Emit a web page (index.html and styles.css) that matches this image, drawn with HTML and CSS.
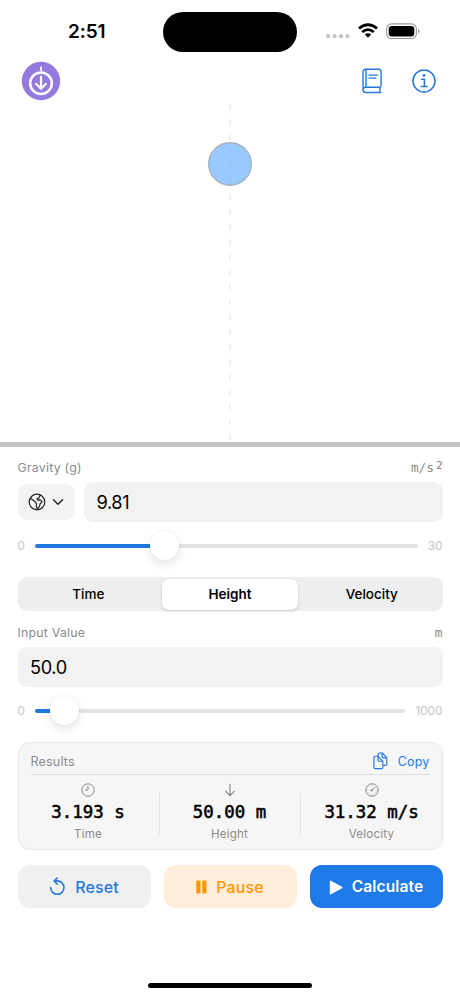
FILE: index.html
```html
<!DOCTYPE html>
<html lang="en">
<head>
<meta charset="utf-8">
<title>Free Fall</title>
<link rel="stylesheet" href="styles.css">
</head>
<body>
<header class="status">
  <div class="clock">2:51</div>
  <div class="island"></div>
  <svg class="indicators" width="94" height="20" viewBox="0 0 94 20">
    <g fill="#c6c6c6"><circle cx="2.2" cy="15.2" r="2.1"/><circle cx="8.6" cy="15.2" r="2.1"/><circle cx="15" cy="15.2" r="2.1"/><circle cx="21.5" cy="15.2" r="2.1"/></g>
    <g fill="none" stroke="#000" stroke-width="2.8"><path d="M33 7.5Q42 .1 51 7.5"/><path d="M36.2 11Q42 6.2 47.8 11"/></g>
    <path d="M42 16.8l-3.2-3.2q3.2-2.5 6.4 0z"/>
    <rect x="60.6" y="2.9" width="29.8" height="14.6" rx="4.9" fill="none" stroke="#999" stroke-width="1.1"/>
    <rect x="62.7" y="4.9" width="25.6" height="10.6" rx="3.2"/>
    <path d="M92 8q3 2.2 0 4.4z" fill="#999"/>
  </svg>
</header>
<nav class="toolbar">
  <svg class="logo" width="40" height="40" viewBox="0 0 40 40">
    <circle cx="20" cy="20" r="19.2" fill="#9579df"/>
    <g fill="none" stroke="#fff" stroke-width="2.5"><circle cx="20" cy="22.3" r="10.8"/><path d="M20 5.8v4" stroke-width="1.8"/><path d="M20 14.8v12.6M14.4 22.2l5.6 5.6 5.6-5.6" stroke-width="2.2"/></g>
  </svg>
  <svg class="book" width="24" height="28" viewBox="0 0 24 28" fill="none" stroke="#2478dc" stroke-width="1.4" stroke-linecap="round" stroke-linejoin="round">
    <path d="M3 22.8V4.9a2.6 2.6 0 0 1 2.6-2.6h13.2a2.3 2.3 0 0 1 2.3 2.3v14a1.6 1.6 0 0 1-1.6 1.6H5.6a2.6 2.6 0 0 0 0 5.3h15.1M6 2.5v17.6M19.9 20.4v5"/><path d="M9 8.2h8.8M9 11.2h6.8" stroke-width="1.2"/>
  </svg>
  <svg width="26" height="26" viewBox="0 0 26 26" fill="none" stroke="#2478dc" stroke-width="1.5" stroke-linecap="round">
    <circle cx="13" cy="13" r="11"/><path d="M10.6 11.2h2.8v7.3M10.2 18.6h5.8"/><circle cx="13" cy="7.4" r="1.4" fill="#2478dc" stroke="none"/>
  </svg>
</nav>
<section class="scene">
  <svg width="60" height="338" viewBox="0 0 60 338">
    <circle cx="30" cy="60" r="21.3" fill="#98c9ff" stroke="#a3b4c4" stroke-width="1.5"/>
    <path d="M30 .3v336" stroke="#999" stroke-opacity=".2" stroke-width="1.4" stroke-dasharray="6 9"/>
  </svg>
</section>
<div class="ground"></div>
<main class="panel">
  <div class="label"><span>Gravity (g)</span><span class="unit">m/s<span class="sq">2</span></span></div>
  <div class="fields">
    <div class="planet">
      <svg width="18" height="18" viewBox="0 0 18 18" fill="none" stroke="#222" stroke-width="1.2" stroke-linejoin="round"><circle cx="9" cy="9" r="7.8"/><path d="M2.2 5l4.6 3.4 1.8 2.4-.4 2.2 1.2 3.2 2.2-3 .4-2.2 2.2-2.4-2.2-1.8-2.4.4-.6-1.4 2-.9 1.2-3"/></svg>
      <svg width="12" height="8" viewBox="0 0 12 8" fill="none" stroke="#222" stroke-width="1.4" stroke-linecap="round" stroke-linejoin="round"><path d="M1.4 1.7L6 6.2l4.6-4.5"/></svg>
    </div>
    <div class="input">9.81</div>
  </div>
  <div class="slider">
    <span class="min">0</span>
    <div class="track"><div class="fill" style="width:33.9%"><i class="thumb"></i></div></div>
    <span class="max">30</span>
  </div>
  <div class="segments"><div>Time</div><div class="selected">Height</div><div>Velocity</div></div>
  <div class="label second"><span>Input Value</span><span class="unit">m</span></div>
  <div class="fields"><div class="input">50.0</div></div>
  <div class="slider">
    <span class="min">0</span>
    <div class="track"><div class="fill" style="width:8.2%"><i class="thumb"></i></div></div>
    <span class="max wide">1000</span>
  </div>
  <section class="results">
    <div class="results-head"><span>Results</span>
      <span class="copy"><svg width="16" height="18" viewBox="0 0 16 18" fill="none" stroke="#2478dc" stroke-width="1.15" stroke-linejoin="round"><path d="M5.2 4.3V2.5q0-1.5 1.5-1.5h2.6l4.5 4.6v6.3q0 1.5-1.5 1.5h-2M9 1v3.4q0 1.4 1.4 1.4h3.4"/><path d="M2.3 4.2h2.5L9.9 9.3v5.9q0 1.4-1.4 1.4H2.3q-1.4 0-1.4-1.4V5.6q0-1.4 1.4-1.4zM5 4.4v3.5q0 1.3 1.3 1.3h3.5"/></svg>Copy</span>
    </div>
    <div class="stats">
      <div class="stat"><svg width="14" height="14" viewBox="0 0 14 14" fill="none" stroke="#858585" stroke-width="1"><circle cx="7" cy="7" r="6.2"/><path d="M7 3v4H3.8"/></svg><b>3.193 s</b><span>Time</span></div>
      <div class="stat"><svg width="14" height="14" viewBox="0 0 14 14" fill="none" stroke="#858585" stroke-width="1.1" stroke-linecap="round" stroke-linejoin="round"><path d="M7 1.3v11.2M2.6 8.2L7 12.6l4.4-4.4"/></svg><b>50.00 m</b><span>Height</span></div>
      <div class="stat"><svg width="14" height="14" viewBox="0 0 14 14" fill="none" stroke="#858585" stroke-width="1"><circle cx="7" cy="7" r="6.2"/><path d="M6.3 7.7L10 4.4"/><circle cx="6.6" cy="7.4" r=".7"/><circle cx="7" cy="7" r="4.2" stroke-dasharray=".6 2.7" stroke-width=".9"/></svg><b>31.32 m/s</b><span>Velocity</span></div>
    </div>
  </section>
  <div class="actions">
    <div class="btn reset"><svg width="17" height="19" viewBox="0 0 17 19" fill="none" stroke="#2478dc" stroke-width="1.6" stroke-linecap="round" stroke-linejoin="round"><path d="M1.6 10.6a6.7 6.7 0 1 0 6.7-6.7H5.2M8.3 1L5.1 3.9l3.2 3.3"/></svg>Reset</div>
    <div class="btn pause"><svg width="11" height="14" viewBox="0 0 11 14" fill="#ff9500"><rect x=".3" y=".4" width="4.2" height="13.2" rx=".8"/><rect x="6.3" y=".4" width="4.2" height="13.2" rx=".8"/></svg>Pause</div>
    <div class="btn calculate"><svg width="14" height="15" viewBox="0 0 14 15" fill="#fff"><path d="M.8 1.5q0-1.3 1.2-.7l11 6q1 .7 0 1.4l-11 6q-1.2.6-1.2-.7z"/></svg>Calculate</div>
  </div>
</main>
<footer class="home"></footer>
</body>
</html>
```

FILE: styles.css
```css
* { box-sizing: border-box; }
body {
  margin: 0;
  width: 460px;
  height: 997px;
  overflow: hidden;
  display: flex;
  flex-direction: column;
  background: #fff;
  color: #000;
  font-family: Inter, sans-serif;
}
svg { display: block; flex: none; }

.status { display: grid; grid-template-columns: 163px 134px 1fr; height: 60px; padding-top: 12px; }
.clock { padding-left: 68px; font-size: 19px; line-height: 40px; font-weight: 600; letter-spacing: -.1px; }
.island { height: 40px; border-radius: 20px; background: #000; }
.indicators { margin: 9px 0 0 29px; }

.toolbar { display: flex; align-items: center; height: 44px; padding: 0 23px 0 21px; }
.logo { margin-top: -2px; }
.book { margin: -2px 27px 0 auto; }
.toolbar svg:last-child { margin-top: -2px; }

.scene { display: flex; justify-content: center; height: 338px; }
.ground { height: 5px; background: #c4c4c4; }

.panel { padding: 12px 17.5px 0; }
.label { display: flex; justify-content: space-between; height: 18px; line-height: 18px; font-size: 12.3px; letter-spacing: .25px; color: #8b8b8d; }
.unit { font-family: "DejaVu Sans Mono", monospace; font-size: 12.8px; letter-spacing: 0; }
.sq { display: inline-block; font-size: 10.5px; line-height: 1; width: 8.5px; text-align: right; transform: translateY(-3px); -webkit-text-stroke: .2px; }
.fields { display: flex; align-items: center; gap: 9px; height: 40px; margin-top: 5px; }
.planet { display: flex; align-items: center; justify-content: center; gap: 6px; width: 57.5px; height: 36px; border-radius: 9px; background: #f3f3f3; }
.input { flex: 1; height: 40px; padding-left: 12.5px; border-radius: 9px; background: #f2f2f2; font-size: 18.2px; line-height: 41px; letter-spacing: -.4px; }

.slider { display: flex; align-items: center; height: 28px; margin-top: 10px; font-size: 11.8px; color: #c5c5c7; }
.min { width: 17px; }
.track { flex: 1; height: 4px; border-radius: 2px; background: #e2e2e2; }
.fill { position: relative; height: 4px; border-radius: 2px; background: #1f79df; }
.thumb { position: absolute; right: -14.5px; top: -13.5px; width: 29px; height: 29px; border-radius: 50%; background: #fff; box-shadow: 0 4px 10px rgba(0, 0, 0, .11), 0 0 2px rgba(0, 0, 0, .07); }
.max { width: 24.5px; text-align: right; }
.max.wide { width: 37.5px; }

.segments { display: grid; grid-template-columns: 141.5px 1fr 141.5px; height: 34px; margin-top: 17px; padding: 2px 0; border-radius: 9px; background: #eee; text-align: center; font-size: 13.5px; line-height: 31px; font-weight: 500; }
.selected { margin: 0 3px; border-radius: 7px; background: #fff; font-weight: 600; box-shadow: 0 1px 3px rgba(0, 0, 0, .18); }
.label.second { margin-top: 13px; }

.results { height: 108px; margin-top: 17px; padding: 0 12px; border: 1px solid #e7e7e7; border-radius: 12px; background: #f6f6f6; color: #8b8b8d; }
.results-head { display: flex; justify-content: space-between; align-items: center; height: 32px; padding-top: 6px; border-bottom: 1px solid #dedede; font-size: 12.5px; letter-spacing: .2px; }
.copy { display: flex; align-items: center; gap: 9px; color: #2478dc; }
.copy svg { margin-top: -1px; }
.stats { display: grid; grid-template-columns: 129px 142px 129px; margin: 0 -1px; }
.stat { position: relative; display: flex; flex-direction: column; align-items: center; height: 70px; padding-top: 8px; font-size: 11.6px; letter-spacing: .2px; }
.stat:first-child { padding-right: 12px; }
.stat:last-child { padding-left: 13px; }
.stat:nth-child(2)::before, .stat:nth-child(2)::after { content: ""; position: absolute; top: 18px; width: 1px; height: 41px; background: #e2e2e2; }
.stat:nth-child(2)::before { left: 0; }
.stat:nth-child(2)::after { right: 0; }
.stat b { height: 22px; margin-top: 5px; color: #000; font: 400 17.4px/21px "DejaVu Sans Mono", monospace; letter-spacing: 0; white-space: nowrap; -webkit-text-stroke: .55px #000; }
.stat span { line-height: 17px; margin-top: 2px; }

.actions { display: grid; grid-template-columns: repeat(3, 1fr); gap: 13px; margin-top: 15px; }
.btn { display: flex; align-items: center; justify-content: center; gap: 9px; height: 43px; border-radius: 12px; font-size: 16px; font-weight: 500; letter-spacing: .1px; }
.reset { background: #f0f0f0; color: #2478dc; }
.pause { background: #ffeedb; color: #ff9500; }
.calculate { background: #1f79e6; color: #fff; font-weight: 600; font-size: 15.6px; line-height: 20px; padding-top: 1px; }

.home { width: 164px; height: 5px; margin: auto auto 9px; border-radius: 3px; background: #000; }
```
